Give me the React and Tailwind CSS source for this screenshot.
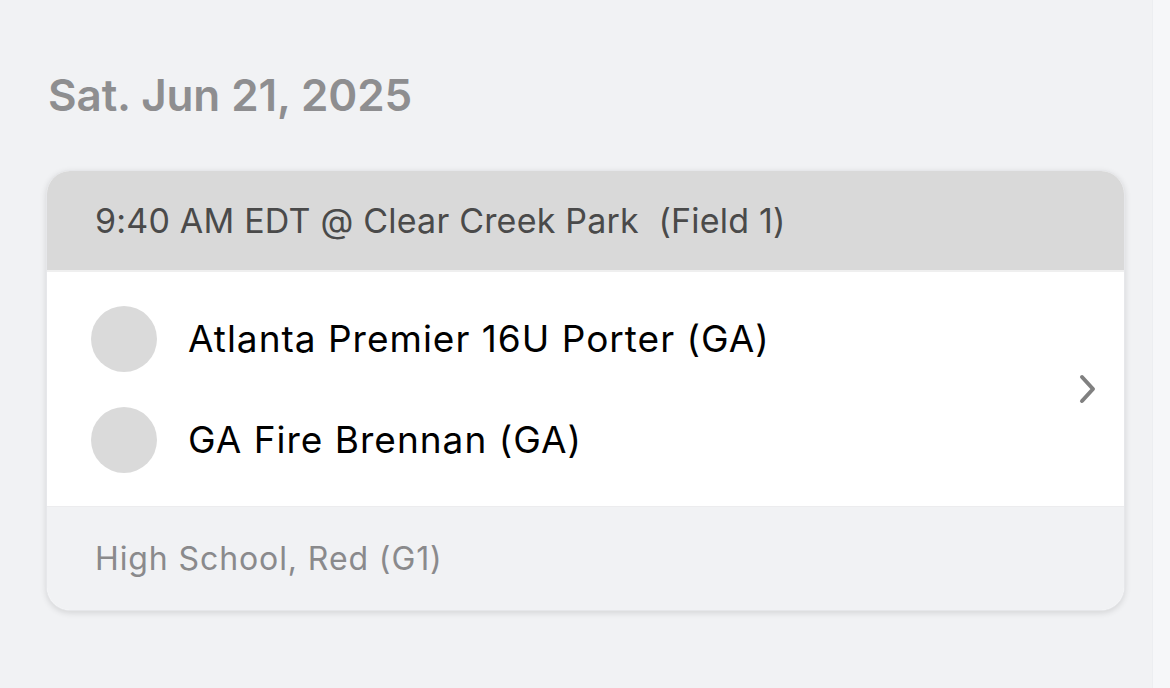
import React from "react";

function Chevron() {
  return (
    <svg width="20" height="30" viewBox="0 0 20 30" fill="none" className="block">
      <path d="M4 3 L15 15 L4 27" stroke="#808080" strokeWidth="4" strokeLinecap="round" strokeLinejoin="round" />
    </svg>
  );
}

export default function App() {
  const font = { fontFamily: "Inter, 'Noto Sans', sans-serif" };
  return (
    <div className="w-[1170px] h-[688px] flex bg-[#f1f2f4] overflow-hidden" style={font}>
      <div className="flex-1 flex flex-col pl-[46px] pr-[27px]">
        <h1 className="mt-[70px] ml-[2px] text-[44px] leading-[50px] font-semibold text-[#8e8e90] tracking-[-0.1px]">
          Sat. Jun 21, 2025
        </h1>
        <div className="mt-[50px] rounded-[24px] overflow-hidden border border-[#e6e7ea] bg-white shadow-[0_2px_6px_rgba(0,0,0,0.12)]">
          <div className="h-[101px] bg-[#d9d9d9] flex items-center pl-[48px] text-[34px] tracking-[0.2px] text-[#4a4a4a] border-b-[2px] border-[#efefef]">
            9:40 AM EDT @ Clear Creek Park&nbsp;&nbsp;(Field 1)
          </div>
          <div className="h-[234px] bg-white flex items-center pl-[44px] pr-[26px]">
            <div className="flex-1 flex flex-col gap-[35px]">
              <div className="flex items-center gap-[31px]">
                <div className="w-[66px] h-[66px] rounded-full bg-[#dadada]" />
                <span className="text-[37px] tracking-[1px] text-black">Atlanta Premier 16U Porter (GA)</span>
              </div>
              <div className="flex items-center gap-[31px]">
                <div className="w-[66px] h-[66px] rounded-full bg-[#dadada]" />
                <span className="text-[37px] tracking-[1px] text-black">GA Fire Brennan (GA)</span>
              </div>
            </div>
            <Chevron />
          </div>
          <div className="h-[104px] bg-[#f1f2f4] flex items-center pl-[48px] text-[32px] tracking-[0.9px] text-[#8a8a8c] border-t border-[#ececee]">
            High School, Red (G1)
          </div>
        </div>
      </div>
      <div className="w-[18px] bg-[#f6f7f9] border-l border-[#eceef1]" />
    </div>
  );
}
